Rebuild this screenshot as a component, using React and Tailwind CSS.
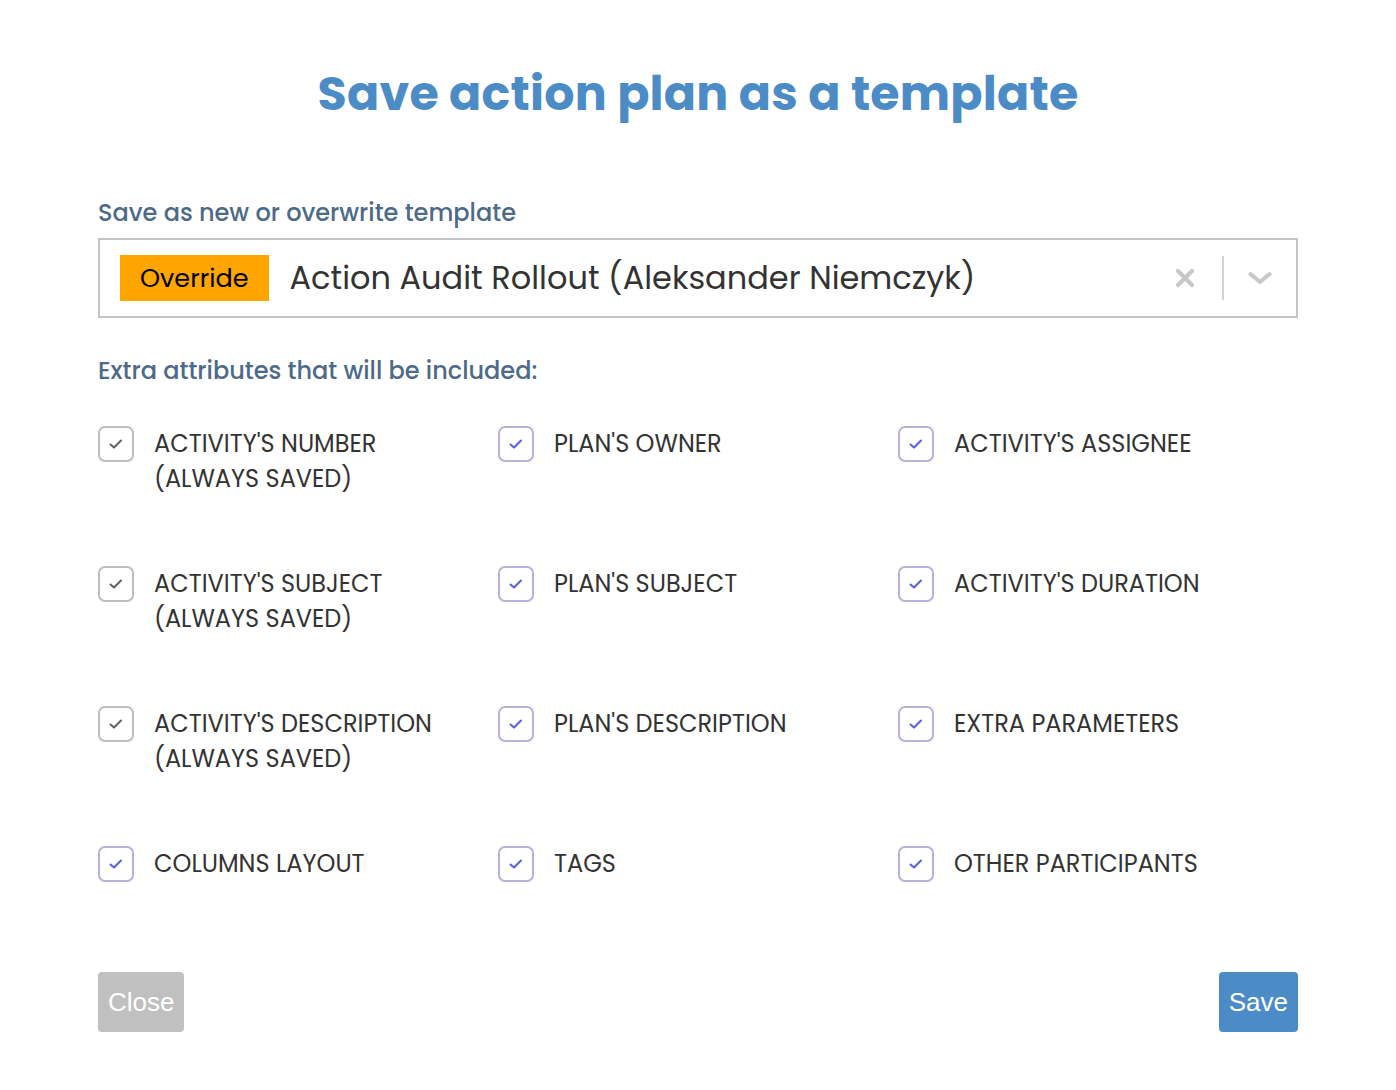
import React from "react";

const items = [
  ["ACTIVITY'S NUMBER", "(ALWAYS SAVED)", true],
  ["PLAN'S OWNER", null, false],
  ["ACTIVITY'S ASSIGNEE", null, false],
  ["ACTIVITY'S SUBJECT", "(ALWAYS SAVED)", true],
  ["PLAN'S SUBJECT", null, false],
  ["ACTIVITY'S DURATION", null, false],
  ["ACTIVITY'S DESCRIPTION", "(ALWAYS SAVED)", true],
  ["PLAN'S DESCRIPTION", null, false],
  ["EXTRA PARAMETERS", null, false],
  ["COLUMNS LAYOUT", null, false],
  ["TAGS", null, false],
  ["OTHER PARTICIPANTS", null, false],
];

function Check({ disabled }) {
  return (
    <div
      className={`w-[36px] h-[36px] shrink-0 rounded-[7px] border-2 flex items-center justify-center ${
        disabled ? "border-[#bdbdc1]" : "border-[#b7b0da]"
      }`}
    >
      <svg width="16" height="12" viewBox="0 0 16 12" fill="none">
        <path
          d="M2.5 6.5 L6 9.5 L13 2.5"
          stroke={disabled ? "#606060" : "#5560e6"}
          strokeWidth="2"
          strokeLinecap="round"
          strokeLinejoin="round"
        />
      </svg>
    </div>
  );
}

export default function App() {
  const font = { fontFamily: "Poppins, 'Open Sans', 'Noto Sans', sans-serif" };
  return (
    <div className="w-[1396px] h-[1090px] bg-white" style={font}>
      <div className="w-[1200px] mx-auto pt-[62px]">
        <h1 className="text-center text-[47.5px] leading-[64px] font-bold text-[#4b8bc6] tracking-[0.2px]">
          Save action plan as a template
        </h1>
        <div className="mt-[71px] text-[24px] leading-[32px] font-medium text-[#4d6a87]">
          Save as new or overwrite template
        </div>
        <div className="mt-[9px] h-[80px] border-2 border-[#c4c4c4] flex items-center pl-[20px]">
          <span className="bg-[#ffa500] h-[46px] px-[20px] flex items-center text-[25.5px] text-black">
            Override
          </span>
          <span className="ml-[21px] text-[32px] text-[#333] flex-1">
            Action Audit Rollout (Aleksander Niemczyk)
          </span>
          <div className="flex items-center h-full">
            <svg width="20" height="20" viewBox="0 0 20 20" className="mr-[27px]">
              <path d="M3 3 L17 17 M17 3 L3 17" stroke="#c8c8c8" strokeWidth="4.2" strokeLinecap="round" />
            </svg>
            <div className="w-[2px] h-[44px] bg-[#d2d2d2]" />
            <svg width="24" height="14" viewBox="0 0 24 14" className="ml-[24px] mr-[24px]">
              <path d="M2.5 3 L12 11 L21.5 3" stroke="#c8c8c8" strokeWidth="4" fill="none" strokeLinecap="round" strokeLinejoin="round" />
            </svg>
          </div>
        </div>
        <div className="mt-[37px] text-[24px] leading-[32px] font-medium text-[#4d6a87]">
          Extra attributes that will be included:
        </div>
        <div className="mt-[39px] grid grid-cols-3 gap-y-[34px]">
          {items.map(([a, b, d], i) => (
            <div key={i} className="flex items-start h-[106px]">
              <Check disabled={d} />
              <div className="ml-[20px] text-[24px] leading-[35px] text-[#333]">
                <div>{a}</div>
                {b && <div>{b}</div>}
              </div>
            </div>
          ))}
        </div>
        <div className="mt-[20px] flex justify-between">
          <button
            className="h-[60px] px-[10px] rounded-[4px] bg-[#c0c0c0] text-white text-[26px]"
            style={{ fontFamily: "'Liberation Sans', Arial, sans-serif" }}
          >
            Close
          </button>
          <button
            className="h-[60px] px-[10px] rounded-[4px] bg-[#4b8bc6] text-white text-[26px]"
            style={{ fontFamily: "'Liberation Sans', Arial, sans-serif" }}
          >
            Save
          </button>
        </div>
      </div>
    </div>
  );
}
